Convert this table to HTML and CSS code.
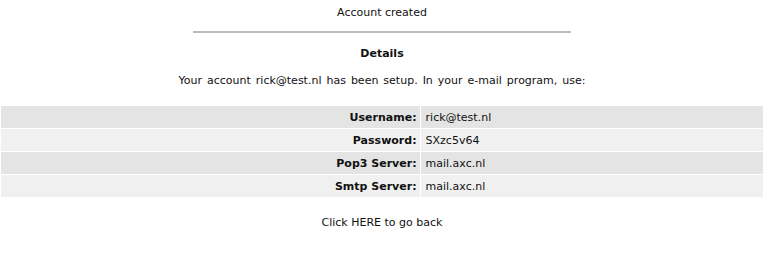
FILE: index.html
```html
<!DOCTYPE html>
<html lang="en">
<head>
  <meta charset="UTF-8">
  <title>Account created</title>
  <link rel="stylesheet" href="styles.css">
</head>
<body>
  <div class="title">Account created</div>
  <hr class="divider">
  <h3>Details</h3>
  <p class="intro">Your account rick@test.nl has been setup. In your e-mail program, use:</p>

  <table class="details">
    <tr class="odd">
      <th>Username:</th>
      <td>rick@test.nl</td>
    </tr>
    <tr class="even">
      <th>Password:</th>
      <td>SXzc5v64</td>
    </tr>
    <tr class="odd">
      <th>Pop3 Server:</th>
      <td>mail.axc.nl</td>
    </tr>
    <tr class="even">
      <th>Smtp Server:</th>
      <td>mail.axc.nl</td>
    </tr>
  </table>

  <p class="back"><a href="#">Click HERE to go back</a></p>
</body>
</html>
```

FILE: styles.css
```css
body {
  font-family: "DejaVu Sans", Verdana, sans-serif;
  font-size: 11px;
  color: #111;
  background-color: white;
  margin: 0;
  padding: 0;
}
.title {
  text-align: center;
  padding-top: 6px;
  height: 21px;
}
.divider {
  width: 378px;
  height: 0;
  margin: 4px auto 0 auto;
  border: none;
  border-top: 2px solid #bcbcbc;
}
h3 {
  text-align: center;
  font-size: 11px;
  font-weight: bold;
  margin: 14px 0 0 0;
  height: 14px;
}
.intro {
  text-align: center;
  word-spacing: 1.5px;
  margin: 13px 0 0 0;
}
.details {
  width: 100%;
  border-spacing: 1px;
  margin-top: 18px;
}
.details th,
.details td {
  height: 22px;
  padding: 0 4px;
  font-size: 11px;
}
.details th {
  width: 55%;
  text-align: right;
  font-weight: bold;
  padding-right: 3px;
}
.details td {
  text-align: left;
  padding-left: 5px;
}
.details tr.odd th,
.details tr.odd td {
  background-color: #e4e4e4;
}
.details tr.even th,
.details tr.even td {
  background-color: #f0f0f0;
}
.back {
  text-align: center;
  margin-top: 18px;
}
.back a {
  color: #111;
  text-decoration: none;
}
```
